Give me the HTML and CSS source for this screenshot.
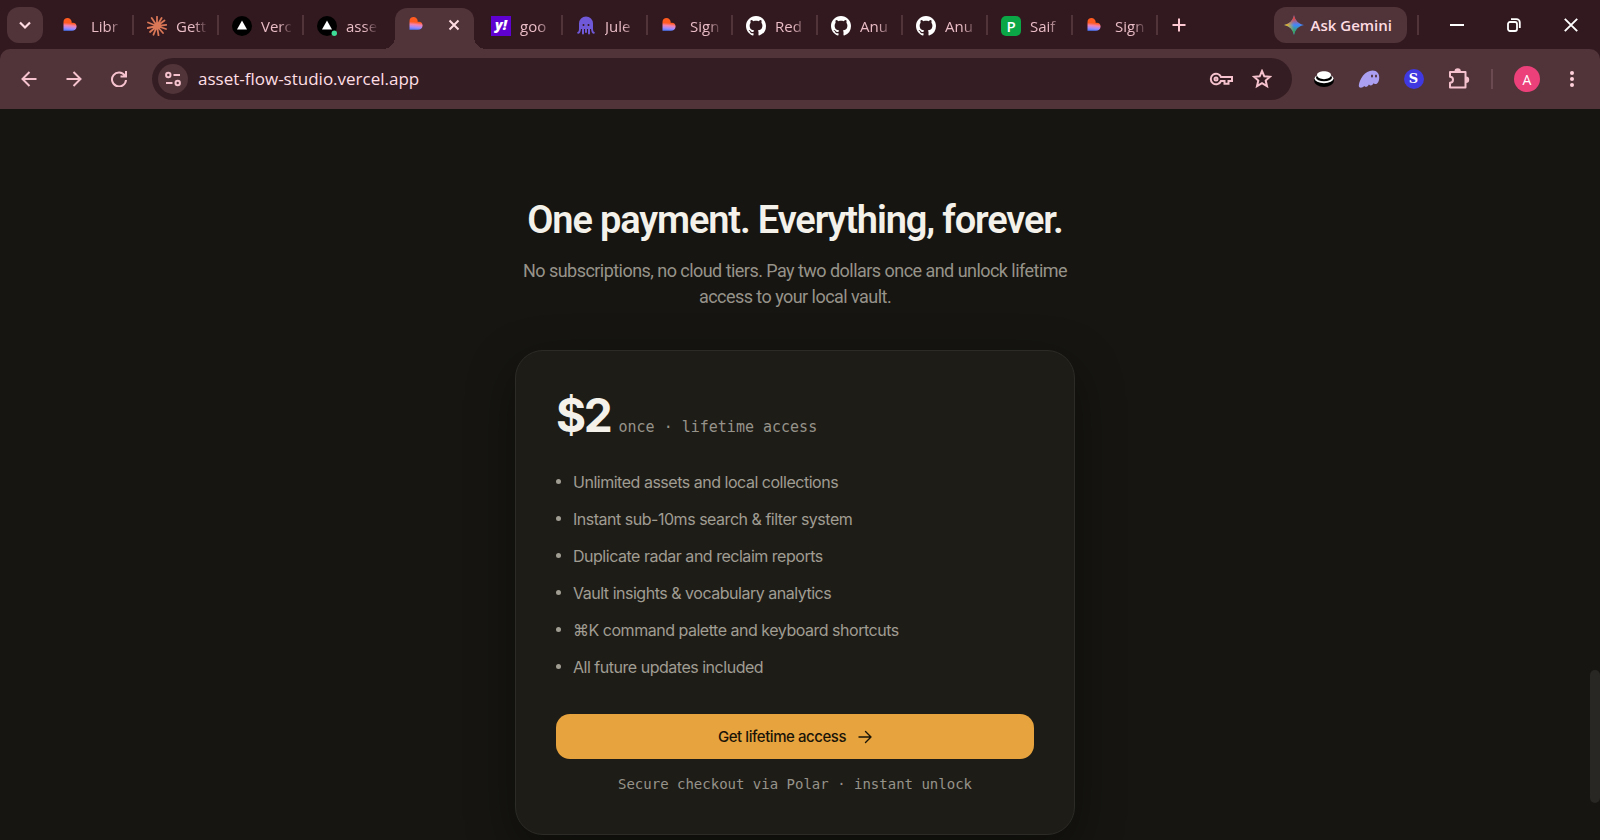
FILE: index.html
```html
<!DOCTYPE html>
<html lang="en">
<head>
    <meta charset="UTF-8">
    <meta name="viewport" content="width=device-width, initial-scale=1">
    <title>Asset Flow Studio</title>
    <link rel="stylesheet" href="styles.css">
</head>
<body>
    <!-- shared icons -->
    <svg class="sprite" aria-hidden="true">
        <defs>
            <linearGradient id="heartFill" x1="0.55" y1="0" x2="0.45" y2="1">
                <stop offset="0.4" stop-color="#ff5a1f"/>
                <stop offset="0.6" stop-color="#f482b0"/>
                <stop offset="0.8" stop-color="#a58bf8"/>
                <stop offset="1" stop-color="#4f7bff"/>
            </linearGradient>
            <linearGradient id="sparkLeft" x1="0" y1="0" x2="0.5" y2="0">
                <stop offset="0.2" stop-color="#fbbc04"/>
                <stop offset="1" stop-color="#fbbc04" stop-opacity="0"/>
            </linearGradient>
            <linearGradient id="sparkTop" x1="0" y1="0" x2="0" y2="0.5">
                <stop offset="0.3" stop-color="#ea4335"/>
                <stop offset="1" stop-color="#ea4335" stop-opacity="0"/>
            </linearGradient>
            <linearGradient id="sparkBottom" x1="0" y1="1" x2="0" y2="0.5">
                <stop offset="0.3" stop-color="#34a853"/>
                <stop offset="1" stop-color="#34a853" stop-opacity="0"/>
            </linearGradient>
            <path id="spark" d="M10 0c1 5.500 4.500 9 10 10-5.500 1-9 4.500-10 10-1-5.500-4.500-9-10-10 5.500-1 9-4.500 10-10z"/>
            <symbol id="heart" viewBox="0 0 20 20">
                <path fill="url(#heartFill)" d="M1.500 14.800V6C1.500 3.500 3.300 2 5.500 2s4.200 1.800 4.200 4v.9c2.600-.8 5.200 1 4.900 3.800-.3 2.400-2.100 4.100-4.600 4.100z"/>
            </symbol>
            <symbol id="github" viewBox="0 0 16 16">
                <path fill="#fff" d="M8 0C3.580 0 0 3.580 0 8c0 3.540 2.290 6.530 5.470 7.590.4.070.55-.17.55-.38 0-.19-.01-.82-.01-1.490-2.010.37-2.530-.49-2.690-.94-.09-.23-.48-.94-.82-1.130-.28-.15-.68-.52-.01-.53.63-.01 1.080.58 1.230.82.72 1.210 1.870.87 2.330.66.070-.52.28-.87.51-1.070-1.780-.2-3.640-.89-3.640-3.950 0-.87.31-1.590.82-2.150-.08-.2-.36-1.020.08-2.120 0 0 .67-.21 2.200.82.64-.18 1.320-.27 2-.27s1.360.090 2 .27c1.530-1.040 2.200-.82 2.200-.82.44 1.100.16 1.920.08 2.120.51.56.82 1.270.82 2.150 0 3.070-1.870 3.750-3.650 3.950.29.25.54.73.54 1.480 0 1.070-.01 1.930-.01 2.200 0 .21.15.46.55.38A8.010 8.010 0 0 0 16 8c0-4.420-3.580-8-8-8z"/>
            </symbol>
        </defs>
    </svg>

    <header class="browser">
        <div class="tab-strip">
            <button class="tab-search" aria-label="Search tabs">
                <svg width="14" height="14" viewBox="0 0 14 14"><path d="M2 4.500l5 5 5-5" fill="none" stroke="#ffdce2" stroke-width="2.200"/></svg>
            </button>
            <nav class="tabs" aria-label="Tabs">
                <button class="tab"><svg class="favicon"><use href="#heart"/></svg><span class="tab-title">Libr</span></button>
                <button class="tab">
                    <svg class="favicon" viewBox="0 0 20 20"><path d="M10 10V.8M10 10l4.600-8M10 10l7.500-5.500M10 10l9.300-1.200M10 10l9 3M10 10l6 7M10 10l1.500 9.300M10 10l-3.500 8.700M10 10l-7 6M10 10l-9.300 2M10 10L1 6.500M10 10L4.700 2" stroke="#d97757" stroke-width="1.800" stroke-linecap="round"/></svg>
                    <span class="tab-title">Gett</span>
                </button>
                <button class="tab">
                    <svg class="favicon" viewBox="0 0 20 20"><circle cx="10" cy="10" r="10" fill="#000"/><path d="M10 4.500l5 9H5z" fill="#fff"/></svg>
                    <span class="tab-title">Verc</span>
                </button>
                <button class="tab">
                    <svg class="favicon" viewBox="0 0 20 20"><circle cx="10" cy="10" r="10" fill="#000"/><path d="M10 4.500l5 9H5z" fill="#fff"/><circle cx="17.300" cy="17.300" r="2.700" fill="#3ddc97"/></svg>
                    <span class="tab-title">asse</span>
                </button>
                <div class="tab active">
                    <svg class="favicon"><use href="#heart"/></svg>
                    <button class="tab-close" aria-label="Close tab"><svg width="12" height="12" viewBox="0 0 12 12"><path d="M1.500 1.500l9 9M10.500 1.500l-9 9" stroke="#ffdce2" stroke-width="2"/></svg></button>
                </div>
                <button class="tab"><span class="favicon yahoo">y!</span><span class="tab-title">goo</span></button>
                <button class="tab">
                    <svg class="favicon" viewBox="0 0 20 20"><path d="M4 12V7.500a6 6 0 0 1 12 0V12c0 3 .3 4.500 1.800 4.800M4 12c0 3-.3 4.500-1.800 4.800" fill="none" stroke="#7059d8" stroke-width="2" stroke-linecap="round"/><path d="M4 13V7.500a6 6 0 0 1 12 0V13z" fill="#7059d8"/><path d="M7 12v5.500M10 12v4M13 12v5.500" stroke="#7059d8" stroke-width="2" stroke-linecap="round"/><circle cx="7.500" cy="9" r="1" fill="#32191f"/><circle cx="12.500" cy="9" r="1" fill="#32191f"/></svg>
                    <span class="tab-title">Jule</span>
                </button>
                <button class="tab"><svg class="favicon"><use href="#heart"/></svg><span class="tab-title">Sign</span></button>
                <button class="tab"><svg class="favicon"><use href="#github"/></svg><span class="tab-title">Red</span></button>
                <button class="tab"><svg class="favicon"><use href="#github"/></svg><span class="tab-title">Anu</span></button>
                <button class="tab"><svg class="favicon"><use href="#github"/></svg><span class="tab-title">Anu</span></button>
                <button class="tab"><span class="favicon peer">P</span><span class="tab-title">Saif</span></button>
                <button class="tab"><svg class="favicon"><use href="#heart"/></svg><span class="tab-title">Sign</span></button>
            </nav>
            <button class="new-tab" aria-label="New tab">
                <svg width="14" height="14" viewBox="0 0 14 14"><path d="M7 .5v13M.5 7h13" stroke="#ffc9d3" stroke-width="2"/></svg>
            </button>
            <button class="gemini">
                <svg width="20" height="20" viewBox="0 0 20 20"><use href="#spark" fill="#3f86ff"/><use href="#spark" fill="url(#sparkBottom)"/><use href="#spark" fill="url(#sparkLeft)"/><use href="#spark" fill="url(#sparkTop)"/></svg>
                Ask Gemini
            </button>
            <span class="divider"></span>
            <div class="window-controls">
                <button aria-label="Minimize"><svg width="14" height="14" viewBox="0 0 14 14"><path d="M0 7h14" stroke="#fff" stroke-width="2"/></svg></button>
                <button aria-label="Restore"><svg width="14" height="14" viewBox="0 0 14 14" fill="none" stroke="#fff" stroke-width="1.800"><rect x="1" y="4" width="9" height="9" rx="2"/><path d="M4 1.200h5.500A3.300 3.300 0 0 1 12.800 4.500V10"/></svg></button>
                <button aria-label="Close"><svg width="14" height="14" viewBox="0 0 14 14"><path d="M.8.8l12.400 12.400M13.200.8L.8 13.200" stroke="#fff" stroke-width="1.900"/></svg></button>
            </div>
        </div>

        <div class="toolbar">
            <button class="tool" aria-label="Back"><svg width="16" height="16" viewBox="0 0 16 16"><path d="M15.500 8H2M8.500 1L1.500 8l7 7"/></svg></button>
            <button class="tool" aria-label="Forward"><svg width="16" height="16" viewBox="0 0 16 16"><path d="M.5 8H14M7.500 1l7 7-7 7"/></svg></button>
            <button class="tool" aria-label="Reload"><svg width="16" height="16" viewBox="0 0 16 16"><path d="M13.800 4.500A7 7 0 1 0 15 9M15 0v5.500H9.500"/></svg></button>
            <div class="omnibox">
                <button class="site-info" aria-label="Site information"><svg width="16" height="16" viewBox="0 0 16 16"><circle cx="3.300" cy="4" r="2.200"/><path d="M8.500 4H15M1 12h6.500"/><circle cx="12.700" cy="12" r="2.200"/></svg></button>
                <input class="address" type="text" aria-label="Address" value="asset-flow-studio.vercel.app">
                <button class="omni-btn" aria-label="Passwords"><svg width="24" height="16" viewBox="0 0 24 16"><path d="M12 6a5.300 5.300 0 1 0 0 4h3.500v2.800h4V10H23V6z"/><circle cx="7" cy="8" r="1.500"/></svg></button>
                <button class="omni-btn" aria-label="Bookmark"><svg width="20" height="20" viewBox="0 0 20 20"><path d="M10 2l2.300 5.300 5.700.5-4.300 3.800L15 17.200l-5-3-5 3 1.300-5.600L2 7.800l5.700-.5z"/></svg></button>
            </div>
            <div class="extensions">
                <button class="ext" aria-label="Hat extension"><svg width="20" height="20" viewBox="0 0 20 20"><ellipse cx="10" cy="11.500" rx="10" ry="6.500" fill="#000"/><ellipse cx="10" cy="9.500" rx="9.500" ry="4.700" fill="#fff"/><ellipse cx="10" cy="8.600" rx="8" ry="3.700" fill="#000"/><path d="M3 6c0-5 14-5 14 0 0 5.500-14 5.500-14 0z" fill="#fff"/></svg></button>
                <button class="ext" aria-label="Ghost extension"><svg width="22" height="20" viewBox="0 0 22 20"><path d="M.8 16.500C1.500 10 7 1.500 14.500 1.500c4.500 0 7 3.300 6.700 7.500-.2 3.500-1.500 6-3.500 6-1.200 0-1.700-.3-2.200-.8-.6 1.800-2.800 3.200-4.600 1.300-1.300 2.500-3.200 3-4.700 1.500-1.700 2.300-5.600 2.500-5.400-.5z" fill="#ab9ff2"/><ellipse cx="14" cy="7" rx="1" ry="1.500" fill="#50343a"/><ellipse cx="18" cy="7" rx="1" ry="1.500" fill="#50343a"/></svg></button>
                <button class="ext" aria-label="S extension"><span class="ext-s">S</span></button>
                <button class="ext" aria-label="Extensions"><svg width="22" height="22" viewBox="0 0 22 22" fill="none" stroke="#f5c2cd" stroke-width="2" stroke-linejoin="round"><path d="M2 4h15.500v15.500H2v-4.700a3 3 0 0 0 0-6z"/><path d="M7.500 3.500a2.200 2.200 0 0 1 4.400 0M18 9.500a2.200 2.200 0 0 1 0 4.400" fill="#f5c2cd"/></svg></button>
                <span class="divider"></span>
                <button class="avatar" aria-label="Profile">A</button>
                <button class="menu" aria-label="Menu"><svg width="4" height="16" viewBox="0 0 4 16" fill="#ffd0d9"><circle cx="2" cy="2" r="2"/><circle cx="2" cy="8" r="2"/><circle cx="2" cy="14" r="2"/></svg></button>
            </div>
        </div>
    </header>

    <div class="viewport">
        <main class="page">
            <section class="pricing">
                <h2 class="pricing-title">One payment. Everything, forever.</h2>
                <p class="pricing-lead">No subscriptions, no cloud tiers. Pay two dollars once and unlock lifetime access to your local vault.</p>
                <div class="card">
                    <div class="price">
                        <span class="amount">$2</span>
                        <span class="terms">once · lifetime access</span>
                    </div>
                    <ul class="features">
                        <li>Unlimited assets and local collections</li>
                        <li>Instant sub-10ms search &amp; filter system</li>
                        <li>Duplicate radar and reclaim reports</li>
                        <li>Vault insights &amp; vocabulary analytics</li>
                        <li>⌘K command palette and keyboard shortcuts</li>
                        <li>All future updates included</li>
                    </ul>
                    <button class="buy">
                        Get lifetime access
                        <svg width="14" height="14" viewBox="0 0 14 14"><path d="M1 7h12M7.500 1.500L13 7l-5.500 5.500" fill="none" stroke="#1a1408" stroke-width="1.400" stroke-linecap="round" stroke-linejoin="round"/></svg>
                    </button>
                    <p class="note">Secure checkout via Polar · instant unlock</p>
                </div>
            </section>
        </main>
        <div class="scrollbar"><span class="thumb"></span></div>
    </div>
</body>
</html>
```
FILE: styles.css
```css
* { box-sizing: border-box; }
html, body { margin: 0; height: 100%; }
body {
    display: flex; flex-direction: column;
    background: #161511; overflow: hidden;
    font-family: Inter, "Liberation Sans", sans-serif;
}
button {
    border: 0; padding: 0; margin: 0; background: none;
    font: inherit; color: inherit; cursor: pointer;
}
svg { display: block; flex: none; }
.sprite { position: absolute; width: 0; height: 0; }

/* ---------- browser chrome ---------- */
.browser {
    flex: none; background: #32191f; color: #e9bcc6;
    font-family: "Open Sans", "Noto Sans", sans-serif;
}
.tab-strip { display: flex; align-items: center; height: 49px; padding-left: 7px; }
.tab-search {
    width: 36px; height: 36px; border-radius: 12px; background: #50343a;
    display: flex; align-items: center; justify-content: center;
}
.tabs { display: flex; align-self: stretch; padding-left: 6px; }
.tab {
    display: flex; align-items: center; gap: 9px;
    position: relative; width: 85px; padding: 2px 12px 0 13px;
    font-size: 15px;
}
.tab::after {
    content: ""; position: absolute; right: 0; top: 15px;
    width: 2px; height: 20px; background: #50343a;
}
.tab:nth-child(4)::after, .tab.active::after { display: none; }
.favicon { width: 20px; height: 20px; flex: none; }
.tab-title {
    min-width: 28px; white-space: nowrap; text-align: left;
    -webkit-mask-image: linear-gradient(90deg, #000 18px, transparent 32px);
    mask-image: linear-gradient(90deg, #000 18px, transparent 32px);
}
.tab.active {
    width: 79px; margin: 8px 4px 0 6px; padding: 0 14px 8px 13px;
    justify-content: space-between;
    background: #50343a; border-radius: 12px 12px 0 0;
}
.tab.active::before {
    content: ""; position: absolute; left: -12px; right: -12px; bottom: 0; height: 12px;
    background:
        radial-gradient(circle at 0 0, transparent 12px, #50343a 12px) left / 12px 12px no-repeat,
        radial-gradient(circle at 100% 0, transparent 12px, #50343a 12px) right / 12px 12px no-repeat;
}
.yahoo {
    background: #5f01d1; color: #fff; font-weight: 800; font-style: italic;
    font-size: 14px; line-height: 18px; text-align: center;
}
.peer {
    background: #0ba746; color: #fff; border-radius: 5px;
    font-weight: 600; font-size: 15px; line-height: 20px; text-align: center;
}
.new-tab { margin-left: 14px; }
.gemini {
    margin-left: auto; height: 36px; padding: 0 15px 0 10px; border-radius: 12px;
    display: flex; align-items: center; gap: 7px;
    background: #50343a; color: #ffdce2; font-size: 15px; font-weight: 600; white-space: nowrap;
}
.divider { width: 2px; height: 20px; background: #6b4a51; }
.tab-strip .divider { margin-left: 10px; background: #50343a; }
.window-controls { display: flex; align-self: stretch; margin-left: 9px; padding-right: 1px; }
.window-controls button { width: 57px; display: flex; align-items: center; justify-content: center; }

.toolbar {
    display: flex; align-items: center; height: 60px; padding: 0 16px 0 6px;
    background: #50343a; border-radius: 10px 10px 0 0;
}
.tool { width: 45px; height: 36px; display: flex; align-items: center; justify-content: center; }
.tool svg, .site-info svg, .omni-btn svg { fill: none; stroke: #f5c2cd; stroke-width: 2; }
.omnibox {
    flex: 1; min-width: 0; display: flex; align-items: center;
    height: 42px; margin-left: 11px; padding: 0 20px 0 6px;
    border-radius: 21px; background: #351e23;
}
.site-info {
    flex: none; width: 30px; height: 30px; border-radius: 50%; background: #50343a;
    display: flex; align-items: center; justify-content: center;
}
.address {
    flex: 1; min-width: 0; border: 0; outline: 0; padding: 0 10px 2px; background: none;
    font: 17px "Open Sans", "Noto Sans", sans-serif; color: #ffdfe5;
}
.omni-btn { margin-left: 19px; }
.extensions { display: flex; align-items: center; margin-left: 9px; }
.ext { width: 45px; height: 36px; display: flex; align-items: center; justify-content: center; }
.ext-s {
    width: 20px; height: 20px; border-radius: 50%; background: #4038e0; color: #fff;
    font: bold 13px/20px "DejaVu Serif", serif;
}
.extensions .divider { margin: 0 21px 0 10px; }
.avatar {
    width: 26px; height: 26px; border-radius: 50%; background: #ec407a;
    color: #fff; font-size: 14px;
}
.menu { width: 24px; margin-left: 20px; display: flex; justify-content: center; }

/* ---------- page ---------- */
.viewport { flex: 1; min-height: 0; display: flex; }
.page { flex: 1; min-width: 0; overflow: hidden; padding: 87px 24px 0; }
.scrollbar { flex: none; width: 10px; display: flex; flex-direction: column; }
.scrollbar::before { content: ""; flex: 76; }
.scrollbar::after { content: ""; flex: 5; }
.thumb { flex: 18; border-radius: 5px; background: #282723; }

.pricing { max-width: 560px; margin: 0 auto; }
.pricing-title, .pricing-lead { font-family: Roboto, Inter, sans-serif; text-align: center; }
.pricing-title {
    margin: 0;
    font-size: 38px; line-height: 48px; font-weight: 600; letter-spacing: -0.03em;
    color: #f3f1ea;
}
.pricing-lead {
    margin: 14px 0 40px;
    font-size: 18px; line-height: 26px; letter-spacing: -0.03em; color: #96938a;
}
.card {
    padding: 40px; border: 1px solid #2c2b26; border-radius: 28px;
    background: #1e1c17; box-shadow: 0 16px 48px rgba(0,0,0,0.4);
}
.price { display: flex; align-items: baseline; gap: 8px; }
.amount {
    font-size: 46px; line-height: 48px; font-weight: 700; letter-spacing: -0.05em;
    color: #f3f1ea;
}
.terms, .note { font-family: "DejaVu Sans Mono", "Liberation Mono", monospace; color: #96938a; }
.terms { font-size: 15px; line-height: 20px; }
.features {
    margin: 31px 0 34px; padding: 0; list-style: none;
    display: flex; flex-direction: column; gap: 12px;
}
.features li {
    display: flex; align-items: center; gap: 12px;
    font-size: 16px; line-height: 25px; letter-spacing: -0.03em; color: #a09d93;
}
.features li::before {
    content: ""; width: 5px; height: 5px; margin-bottom: 3px;
    border-radius: 50%; background: #a09d93;
}
.buy {
    width: 100%; height: 45px; border-radius: 14px; background: #e7a33e;
    display: flex; align-items: center; justify-content: center; gap: 12px;
    font-size: 15px; font-weight: 500; letter-spacing: -0.03em; color: #1a1408;
}
.note { margin: 15px 0 0; text-align: center; font-size: 14px; line-height: 20px; }
```
